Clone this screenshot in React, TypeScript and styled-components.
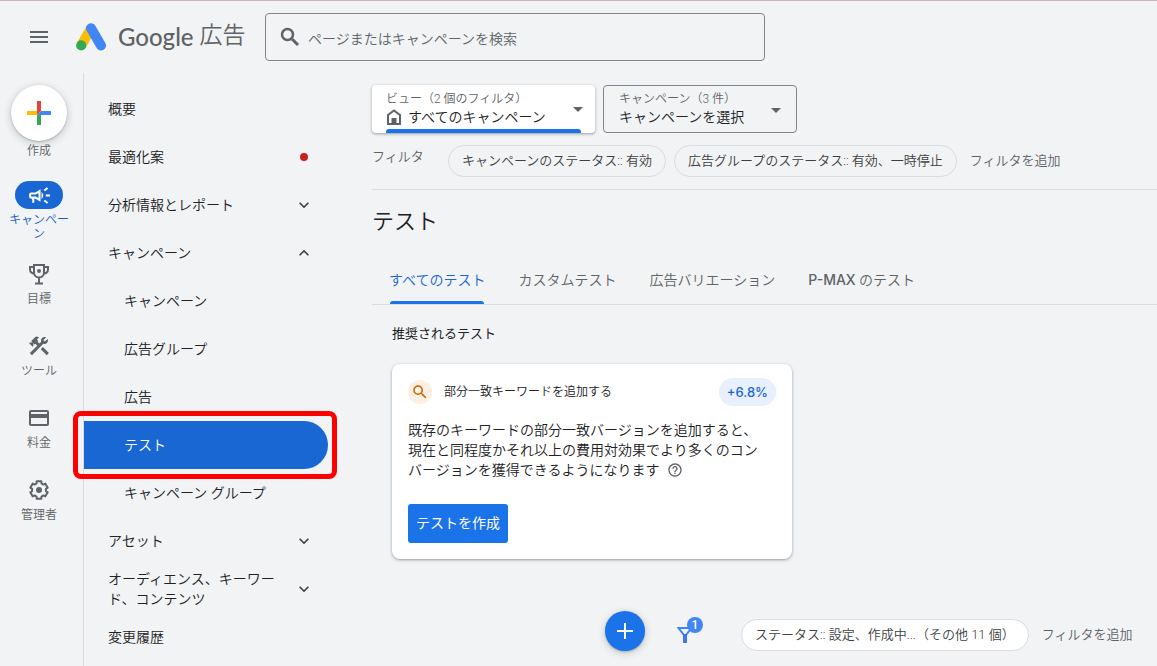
import React from "react";
import styled, { createGlobalStyle, css } from "styled-components";
import {
  MdOutlineCampaign,
  MdConstruction,
  MdOutlineCreditCard,
  MdKeyboardArrowDown,
  MdKeyboardArrowUp,
  MdSearch,
  MdHelpOutline,
} from "react-icons/md";

const GlobalStyle = createGlobalStyle`
  *, *::before, *::after { box-sizing: border-box; }
  body {
    margin: 0;
    background: #f1f3f4;
    color: #202124;
    font-family: Roboto, "Noto Sans CJK JP", sans-serif;
    font-size: 14px;
    font-weight: 350;
    line-height: 20px;
  }
  button, input, select { font: inherit; color: inherit; }
  button { border: 0; padding: 0; background: none; cursor: pointer; }
  a { color: inherit; text-decoration: none; }
  svg { display: block; flex: none; }
`;

const Page = styled.div`
  display: flex;
  flex-direction: column;
  min-height: 100vh;
  overflow-x: hidden;
  border-top: 1px solid #cbb3b9;
`;

const Header = styled.header`
  display: flex;
  align-items: center;
  height: 72px;
`;

const MenuButton = styled.button`
  display: flex;
  justify-content: center;
  width: 78px;
  color: #5f6368;
`;

const Brand = styled.a`
  display: flex;
  flex: none;
  align-items: center;
  width: 189px;
  margin-left: -2px;
  color: #5f6368;
`;

const BrandName = styled.span`
  margin-left: 12px;
  font-family: Lato, sans-serif;
  font-size: 24px;
  font-weight: 500;
  line-height: 32px;
`;

const BrandProduct = styled.span`
  margin-left: 6px;
  padding-bottom: 2px;
  font-size: 23px;
  line-height: 32px;
`;

const SearchBox = styled.label`
  display: flex;
  flex: 0 1 500px;
  align-items: center;
  gap: 6px;
  height: 48px;
  padding: 0 12px;
  border: 1px solid #80868b;
  border-radius: 4px;
  color: #5f6368;
`;

const SearchInput = styled.input`
  flex: 1;
  min-width: 0;
  padding: 3px 0 0;
  border: 0;
  outline: 0;
  background: transparent;
  &::placeholder { color: #5f6368; opacity: 1; }
`;

const Body = styled.div`
  display: flex;
  flex: 1;
`;

const Rail = styled.nav`
  display: flex;
  flex: none;
  flex-direction: column;
  align-items: center;
  gap: 12px;
  width: 83px;
  padding: 12px 5px 0 0;
  color: #5f6368;
`;

const RailItem = styled.a<{ $active?: boolean }>`
  display: flex;
  flex-direction: column;
  align-items: center;
  width: 72px;
  ${(p) => p.$active && css`margin-bottom: 7px; color: #185abc;`}
`;

const RailIcon = styled.span<{ $active?: boolean }>`
  display: flex;
  align-items: center;
  justify-content: center;
  width: 48px;
  height: 28px;
  border-radius: 14px;
  ${(p) => p.$active && css`background: #1967d2; color: #fff;`}
`;

const RailLabel = styled.span`
  width: 62px;
  min-height: 28px;
  margin-top: 4px;
  font-size: 12px;
  line-height: 14px;
  text-align: center;
`;

const CreateButton = styled.button`
  display: flex;
  flex-direction: column;
  align-items: center;
  margin-bottom: 8px;
  font-size: 12px;
  color: #5f6368;
`;

const CreateCircle = styled.span`
  display: flex;
  align-items: center;
  justify-content: center;
  width: 56px;
  height: 56px;
  border-radius: 50%;
  background: #fff;
  box-shadow: 0 1px 2px rgba(60, 64, 67, 0.3), 0 2px 6px 2px rgba(60, 64, 67, 0.15);
`;

const CreateLabel = styled.span`
  line-height: 20px;
`;

const Sidebar = styled.nav`
  flex: none;
  width: 260px;
  padding: 12px 15px 0 0;
  border-left: 1px solid #dadce0;
`;

const NavItem = styled.a<{ $child?: boolean; $active?: boolean }>`
  position: relative;
  display: flex;
  align-items: center;
  justify-content: space-between;
  height: 48px;
  padding: 0 12px 0 ${(p) => (p.$child ? 40 : 24)}px;
  border-radius: 0 24px 24px 0;
  ${(p) => p.$active && css`background: #1967d2; color: #fff;`}
`;

const NavText = styled.span`
  max-width: 176px;
`;

const NavDot = styled.span`
  width: 8px;
  height: 8px;
  margin-right: 8px;
  border-radius: 50%;
  background: #c5221f;
`;

const NavChevron = styled.span`
  margin-right: 2px;
  color: #3c4043;
`;

const Highlight = styled.span`
  position: absolute;
  inset: -10px -9px -10px -11px;
  border: 5px solid #ff0000;
  border-radius: 8px;
`;

const Main = styled.main`
  flex: 1;
  min-width: 0;
  padding: 12px 0 12px 29px;
`;

const Selectors = styled.div`
  display: flex;
  gap: 8px;
`;

const Selector = styled.div<{ $raised?: boolean }>`
  position: relative;
  width: ${(p) => (p.$raised ? 223 : 194)}px;
  height: 48px;
  padding: ${(p) => (p.$raised ? "5px 14px 0" : "4px 15px 0")};
  border-radius: 4px;
  ${(p) =>
    p.$raised
      ? css`
          background: #fff;
          box-shadow: 0 1px 2px rgba(60, 64, 67, 0.3), 0 1px 3px 1px rgba(60, 64, 67, 0.15);
        `
      : css`border: 1px solid #80868b;`}
`;

const SelectorLabel = styled.label`
  display: block;
  font-size: 12px;
  line-height: 18px;
  color: #5f6368;
`;

const SelectorValue = styled.div`
  display: flex;
  align-items: center;
  gap: 6px;
  height: 18px;
  color: #5f6368;
`;

const SelectorInput = styled.select`
  flex: 1;
  min-width: 0;
  padding: 0;
  border: 0;
  outline: 0;
  appearance: none;
  background: transparent;
  line-height: 18px;
  color: #202124;
`;

const Caret = styled.span`
  position: absolute;
  top: 22px;
  right: 12px;
  border: 5px solid transparent;
  border-top-color: #5f6368;
  border-bottom: 0;
  pointer-events: none;
  ${Selector}:not(:first-child) & { right: 15px; }
`;

const SelectorBar = styled.span`
  position: absolute;
  right: 14px;
  bottom: 0;
  left: 14px;
  height: 4px;
  border-radius: 3px 3px 0 0;
  background: #1a73e8;
`;

const Filters = styled.div`
  display: flex;
  align-items: center;
  padding: 12px 0;
  border-bottom: 1px solid #dadce0;
  font-size: 13px;
  color: #5f6368;
  white-space: nowrap;
`;

const FilterLabel = styled.span`
  align-self: flex-start;
  width: 76px;
  line-height: 24px;
`;

const Chip = styled.button<{ $filled?: boolean }>`
  height: 32px;
  margin-right: 8px;
  padding: 0 13px;
  border: 1px solid #dadce0;
  border-radius: 16px;
  background: ${(p) => (p.$filled ? "#fff" : "transparent")};
  font-size: 13px;
  line-height: 20px;
  color: #3c4043;
  white-space: nowrap;
`;

const AddFilter = styled.button`
  height: 32px;
  margin-left: 5px;
  font-size: 13px;
  color: #5f6368;
  white-space: nowrap;
`;

const Title = styled.h1`
  margin: 16px 0 18px;
  font-size: 22px;
  font-weight: 350;
  line-height: 32px;
`;

const Tabs = styled.div`
  display: flex;
  gap: 33px;
  padding-left: 17px;
  border-bottom: 1px solid #dadce0;
`;

const Tab = styled.button<{ $active?: boolean }>`
  position: relative;
  height: 48px;
  color: ${(p) => (p.$active ? "#1967d2" : "#5f6368")};
  white-space: nowrap;
  ${(p) =>
    p.$active &&
    css`
      &::after {
        content: "";
        position: absolute;
        right: 1px;
        bottom: 0;
        left: 1px;
        height: 3px;
        border-radius: 3px 3px 0 0;
        background: #1a73e8;
      }
    `}
`;

const Medium = styled.span`
  font-family: Inter, sans-serif;
  font-weight: 500;
`;

const Section = styled.section`
  padding: 19px 20px 0;
`;

const SectionTitle = styled.h2`
  margin: 0 0 20px;
  font-size: 13px;
  font-weight: 400;
  line-height: 20px;
`;

const Card = styled.article`
  max-width: 400px;
  padding: 14px 16px 16px;
  border-radius: 8px;
  background: #fff;
  box-shadow: 0 1px 2px rgba(60, 64, 67, 0.3), 0 1px 3px 1px rgba(60, 64, 67, 0.15);
`;

const CardHeader = styled.header`
  display: flex;
  align-items: center;
`;

const CardIcon = styled.span`
  display: flex;
  align-items: center;
  justify-content: center;
  width: 24px;
  height: 24px;
  border-radius: 50%;
  background: #feefe3;
  color: #c26401;
`;

const CardTitle = styled.h3`
  flex: 1;
  margin: 0 0 0 12px;
  font-size: 12px;
  font-weight: 350;
`;

const Uplift = styled.span`
  height: 28px;
  padding: 0 8px;
  border-radius: 14px;
  background: #e8f0fe;
  font-family: Inter, sans-serif;
  font-size: 13px;
  font-weight: 500;
  line-height: 28px;
  color: #1967d2;
`;

const CardText = styled.p`
  margin: 14px 8px 24px 0;
`;

const Help = styled.span`
  display: inline-block;
  margin-left: 8px;
  vertical-align: -3px;
  line-height: 16px;
  color: #5f6368;
`;

const PrimaryButton = styled.button`
  height: 39px;
  padding: 0 8px 2px;
  border-radius: 3px;
  background: #1a73e8;
  font-weight: 400;
  color: #fff;
`;

const TableBar = styled.div`
  display: flex;
  align-items: flex-end;
  padding: 52px 0 0 233px;
`;

const AddButton = styled.button`
  display: flex;
  flex: none;
  align-items: center;
  justify-content: center;
  width: 40px;
  height: 40px;
  border-radius: 50%;
  background: #1a73e8;
  box-shadow: 0 1px 2px rgba(60, 64, 67, 0.3), 0 2px 6px 2px rgba(60, 64, 67, 0.15);
`;

const FilterButton = styled.button`
  position: relative;
  flex: none;
  margin: 0 48px 8px 32px;
`;

const FilterCount = styled.span`
  position: absolute;
  top: -9px;
  right: -10px;
  width: 16px;
  height: 16px;
  border-radius: 50%;
  background: #4285f4;
  font-size: 12px;
  font-weight: 500;
  line-height: 16px;
  color: #fff;
`;

const AdsLogo = () => (
  <svg width="30" height="28" viewBox="0 0 30 28" aria-hidden="true">
    <path d="M5.2 22.5 15 5.5" stroke="#fbbc04" strokeWidth="10" />
    <path d="M15 5.3 25 22.5" stroke="#4285f4" strokeWidth="10" strokeLinecap="round" />
    <circle cx="5.2" cy="22.4" r="5.1" fill="#34a853" />
  </svg>
);

const MenuIcon = () => (
  <svg width="20" height="14" viewBox="0 0 20 14" aria-hidden="true">
    <path d="M1 2h18M1 7h18M1 12h18" stroke="currentColor" strokeWidth="2" />
  </svg>
);

const SearchIcon = () => (
  <svg width="24" height="24" viewBox="0 0 24 24" fill="none" stroke="currentColor" aria-hidden="true">
    <circle cx="9.500" cy="9.500" r="5.500" strokeWidth="2.500" />
    <path d="m14 14 6 6" strokeWidth="3" />
  </svg>
);

const CreateIcon = () => (
  <svg width="24" height="24" viewBox="0 0 24 24" aria-hidden="true">
    <path d="M10 0h4v10l-4 4z" fill="#ea4335" />
    <path d="M0 10h10v4H0z" fill="#fbbc04" />
    <path d="M10 14h4v10h-4z" fill="#34a853" />
    <path d="M14 10h10v4H10z" fill="#4285f4" />
  </svg>
);

const TrophyIcon = () => (
  <svg width="24" height="24" viewBox="0 0 24 24" fill="none" stroke="currentColor" strokeWidth="2" aria-hidden="true">
    <path d="M7 3h10v7.5a5 5 0 0 1-10 0zM7 5H3v2.500a4 4 0 0 0 4.500 4M17 5h4v2.500a4 4 0 0 1-4.500 4M12 15.500V21M8 21.500h8" />
    <circle cx="12" cy="9" r="2" fill="currentColor" stroke="none" />
  </svg>
);

// Six teeth, each given as [radius, angle offset] corners around the hub.
const gearOutline = Array.from({ length: 6 }, (_, tooth) =>
  [[7, -21], [9, -15], [9, 15], [7, 21]].map(([radius, offset]) => {
    const angle = ((tooth * 60 - 90 + offset) * Math.PI) / 180;
    return `${(12 + radius * Math.cos(angle)).toFixed(2)},${(12 + radius * Math.sin(angle)).toFixed(2)}`;
  }).join(" ")
).join(" ");

const SettingsIcon = () => (
  <svg width="24" height="24" viewBox="0 0 24 24" aria-hidden="true">
    <polygon points={gearOutline} fill="none" stroke="currentColor" strokeWidth="2" strokeLinejoin="round" />
    <circle cx="12" cy="12" r="3" fill="currentColor" />
  </svg>
);

const HomeIcon = () => (
  <svg width="16" height="16" viewBox="0 0 16 16" aria-hidden="true">
    <path d="M2 15V6l6-4.500L14 6v9z" fill="none" stroke="currentColor" strokeWidth="2" />
    <path d="M5.500 9h5v6h-5z" fill="currentColor" />
  </svg>
);

const PlusIcon = () => (
  <svg width="16" height="16" viewBox="0 0 16 16" aria-hidden="true">
    <path d="M8 0v16M0 8h16" stroke="#fff" strokeWidth="2" />
  </svg>
);

const FunnelIcon = () => (
  <svg width="16" height="17" viewBox="0 0 16 17" aria-hidden="true">
    <path d="M1.500 2h13L9 9H7z" fill="none" stroke="#4285f4" strokeWidth="2" />
    <path d="M6 8h4v9H6z" fill="#3b78e7" />
  </svg>
);

const railItems = [
  { label: "キャンペーン", icon: <MdOutlineCampaign size={25} />, active: true },
  { label: "目標", icon: <TrophyIcon /> },
  { label: "ツール", icon: <MdConstruction size={24} /> },
  { label: "料金", icon: <MdOutlineCreditCard size={24} /> },
  { label: "管理者", icon: <SettingsIcon /> },
];

type NavEntry = {
  label: string;
  child?: boolean;
  active?: boolean;
  mark?: "dot" | "down" | "up";
};

const navEntries: NavEntry[] = [
  { label: "概要" },
  { label: "最適化案", mark: "dot" },
  { label: "分析情報とレポート", mark: "down" },
  { label: "キャンペーン", mark: "up" },
  { label: "キャンペーン", child: true },
  { label: "広告グループ", child: true },
  { label: "広告", child: true },
  { label: "テスト", child: true, active: true },
  { label: "キャンペーン グループ", child: true },
  { label: "アセット", mark: "down" },
  { label: "オーディエンス、キーワード、コンテンツ", mark: "down" },
  { label: "変更履歴" },
];

export default function App() {
  return (
    <Page>
      <GlobalStyle />
      <Header>
        <MenuButton aria-label="メニュー">
          <MenuIcon />
        </MenuButton>
        <Brand href="#">
          <AdsLogo />
          <BrandName>Google</BrandName>
          <BrandProduct>広告</BrandProduct>
        </Brand>
        <SearchBox>
          <SearchIcon />
          <SearchInput
            type="text"
            aria-label="検索"
            placeholder="ページまたはキャンペーンを検索"
          />
        </SearchBox>
      </Header>
      <Body>
        <Rail>
          <CreateButton>
            <CreateCircle>
              <CreateIcon />
            </CreateCircle>
            <CreateLabel>作成</CreateLabel>
          </CreateButton>
          {railItems.map((item) => (
            <RailItem key={item.label} href="#" $active={item.active}>
              <RailIcon $active={item.active}>{item.icon}</RailIcon>
              <RailLabel>{item.label}</RailLabel>
            </RailItem>
          ))}
        </Rail>
        <Sidebar>
          {navEntries.map((entry, index) => (
            <NavItem key={index} href="#" $child={entry.child} $active={entry.active}>
              <NavText>{entry.label}</NavText>
              {entry.mark === "dot" && <NavDot />}
              {entry.mark === "down" && (
                <NavChevron>
                  <MdKeyboardArrowDown size={20} />
                </NavChevron>
              )}
              {entry.mark === "up" && (
                <NavChevron>
                  <MdKeyboardArrowUp size={20} />
                </NavChevron>
              )}
              {entry.active && <Highlight />}
            </NavItem>
          ))}
        </Sidebar>
        <Main>
          <Selectors>
            <Selector $raised>
              <SelectorLabel htmlFor="view">ビュー（2 個のフィルタ）</SelectorLabel>
              <SelectorValue>
                <HomeIcon />
                <SelectorInput id="view">
                  <option>すべてのキャンペーン</option>
                </SelectorInput>
              </SelectorValue>
              <Caret />
              <SelectorBar />
            </Selector>
            <Selector>
              <SelectorLabel htmlFor="campaign">キャンペーン（3 件）</SelectorLabel>
              <SelectorValue>
                <SelectorInput id="campaign">
                  <option>キャンペーンを選択</option>
                </SelectorInput>
              </SelectorValue>
              <Caret />
            </Selector>
          </Selectors>
          <Filters>
            <FilterLabel>フィルタ</FilterLabel>
            <Chip>キャンペーンのステータス:: 有効</Chip>
            <Chip>広告グループのステータス:: 有効、一時停止</Chip>
            <AddFilter>フィルタを追加</AddFilter>
          </Filters>
          <Title>テスト</Title>
          <Tabs role="tablist">
            <Tab role="tab" aria-selected="true" $active>
              すべてのテスト
            </Tab>
            <Tab role="tab">カスタムテスト</Tab>
            <Tab role="tab">広告バリエーション</Tab>
            <Tab role="tab">
              <Medium>P-MAX</Medium> のテスト
            </Tab>
          </Tabs>
          <Section>
            <SectionTitle>推奨されるテスト</SectionTitle>
            <Card>
              <CardHeader>
                <CardIcon>
                  <MdSearch size={18} />
                </CardIcon>
                <CardTitle>部分一致キーワードを追加する</CardTitle>
                <Uplift>+6.8%</Uplift>
              </CardHeader>
              <CardText>
                既存のキーワードの部分一致バージョンを追加すると、現在と同程度かそれ以上の費用対効果でより多くのコンバージョンを獲得できるようになります
                <Help>
                  <MdHelpOutline size={16} />
                </Help>
              </CardText>
              <PrimaryButton>テストを作成</PrimaryButton>
            </Card>
          </Section>
          <TableBar>
            <AddButton aria-label="作成">
              <PlusIcon />
            </AddButton>
            <FilterButton aria-label="フィルタ">
              <FunnelIcon />
              <FilterCount>1</FilterCount>
            </FilterButton>
            <Chip $filled>ステータス:: 設定、作成中...（その他 11 個）</Chip>
            <AddFilter>フィルタを追加</AddFilter>
          </TableBar>
        </Main>
      </Body>
    </Page>
  );
}
